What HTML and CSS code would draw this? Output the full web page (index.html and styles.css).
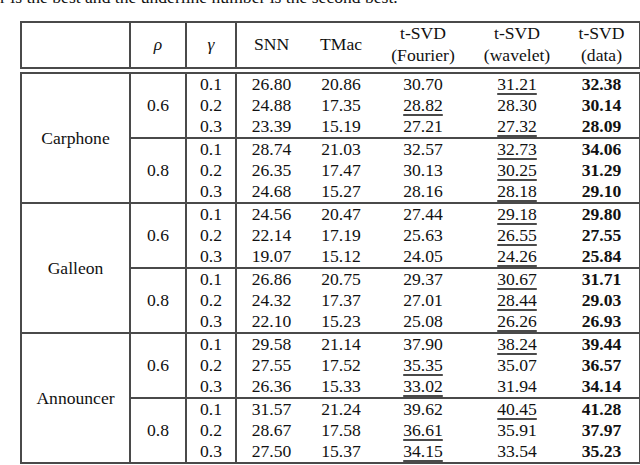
FILE: index.html
```html
<!DOCTYPE html>
<html>
<head>
<meta charset="utf-8">
<link rel="stylesheet" href="styles.css">
</head>
<body>
<p class="caption">r is the best and the underline number is the second best.</p>
<table class="results">
  <colgroup>
    <col class="w-name"><col class="w-rho"><col class="w-gamma">
    <col class="w-snn"><col class="w-tmac"><col class="w-svd"><col class="w-svd"><col class="w-data">
  </colgroup>
  <thead>
    <tr>
      <th class="sep"></th>
      <th class="sep"><i>ρ</i></th>
      <th class="sep"><i>γ</i></th>
      <th>SNN</th>
      <th>TMac</th>
      <th>t-SVD<br>(Fourier)</th>
      <th>t-SVD<br>(wavelet)</th>
      <th>t-SVD<br>(data)</th>
    </tr>
  </thead>
  <tbody class="gap"><tr><td colspan="8"></td></tr></tbody>
  <tbody class="set">
    <tr><td class="name" rowspan="6">Carphone</td><td class="rho" rowspan="3">0.6</td><td class="sep">0.1</td><td>26.80</td><td>20.86</td><td>30.70</td><td><u>31.21</u></td><td><b>32.38</b></td></tr>
    <tr><td class="sep">0.2</td><td>24.88</td><td>17.35</td><td><u>28.82</u></td><td>28.30</td><td><b>30.14</b></td></tr>
    <tr class="end"><td class="sep">0.3</td><td>23.39</td><td>15.19</td><td>27.21</td><td><u>27.32</u></td><td><b>28.09</b></td></tr>
    <tr><td class="rho" rowspan="3">0.8</td><td class="sep">0.1</td><td>28.74</td><td>21.03</td><td>32.57</td><td><u>32.73</u></td><td><b>34.06</b></td></tr>
    <tr><td class="sep">0.2</td><td>26.35</td><td>17.47</td><td>30.13</td><td><u>30.25</u></td><td><b>31.29</b></td></tr>
    <tr><td class="sep">0.3</td><td>24.68</td><td>15.27</td><td>28.16</td><td><u>28.18</u></td><td><b>29.10</b></td></tr>
  </tbody>
  <tbody class="set">
    <tr><td class="name" rowspan="6">Galleon</td><td class="rho" rowspan="3">0.6</td><td class="sep">0.1</td><td>24.56</td><td>20.47</td><td>27.44</td><td><u>29.18</u></td><td><b>29.80</b></td></tr>
    <tr><td class="sep">0.2</td><td>22.14</td><td>17.19</td><td>25.63</td><td><u>26.55</u></td><td><b>27.55</b></td></tr>
    <tr class="end"><td class="sep">0.3</td><td>19.07</td><td>15.12</td><td>24.05</td><td><u>24.26</u></td><td><b>25.84</b></td></tr>
    <tr><td class="rho" rowspan="3">0.8</td><td class="sep">0.1</td><td>26.86</td><td>20.75</td><td>29.37</td><td><u>30.67</u></td><td><b>31.71</b></td></tr>
    <tr><td class="sep">0.2</td><td>24.32</td><td>17.37</td><td>27.01</td><td><u>28.44</u></td><td><b>29.03</b></td></tr>
    <tr><td class="sep">0.3</td><td>22.10</td><td>15.23</td><td>25.08</td><td><u>26.26</u></td><td><b>26.93</b></td></tr>
  </tbody>
  <tbody class="set">
    <tr><td class="name" rowspan="6">Announcer</td><td class="rho" rowspan="3">0.6</td><td class="sep">0.1</td><td>29.58</td><td>21.14</td><td>37.90</td><td><u>38.24</u></td><td><b>39.44</b></td></tr>
    <tr><td class="sep">0.2</td><td>27.55</td><td>17.52</td><td><u>35.35</u></td><td>35.07</td><td><b>36.57</b></td></tr>
    <tr class="end"><td class="sep">0.3</td><td>26.36</td><td>15.33</td><td><u>33.02</u></td><td>31.94</td><td><b>34.14</b></td></tr>
    <tr><td class="rho" rowspan="3">0.8</td><td class="sep">0.1</td><td>31.57</td><td>21.24</td><td>39.62</td><td><u>40.45</u></td><td><b>41.28</b></td></tr>
    <tr><td class="sep">0.2</td><td>28.67</td><td>17.58</td><td><u>36.61</u></td><td>35.91</td><td><b>37.97</b></td></tr>
    <tr><td class="sep">0.3</td><td>27.50</td><td>15.37</td><td><u>34.15</u></td><td>33.54</td><td><b>35.23</b></td></tr>
  </tbody>
</table>
</body>
</html>
```

FILE: styles.css
```css
html, body {
  margin: 0;
  padding: 0;
  background: #fff;
}
body {
  font-family: "Liberation Serif", "Times New Roman", serif;
  font-size: 17.6px;
  color: #111;
  overflow: hidden;
}
.caption {
  margin: -13px 0 0 0;
  line-height: 20px;
  white-space: nowrap;
}
.results {
  margin: 14px 0 0 20px;
  border-collapse: collapse;
  table-layout: fixed;
  width: 619px;
}
.w-name { width: 109px; }
.w-rho { width: 56px; }
.w-gamma { width: 50px; }
.w-snn { width: 70px; }
.w-tmac { width: 70px; }
.w-svd { width: 94px; }
.w-data { width: 76px; }

.results thead,
.results tbody.set {
  border: 2px solid #4a4a4a;
}
.results th {
  font-weight: normal;
  padding: 0;
  height: 44px;
  line-height: 21.6px;
  text-align: center;
  vertical-align: middle;
}
.results td {
  padding: 0;
  height: 21px;
  line-height: 21px;
  text-align: center;
  vertical-align: middle;
}
.results .sep,
.results .rho,
.results .name {
  border-right: 2px solid #4a4a4a;
}
.results .rho {
  border-bottom: 2px solid #4a4a4a;
}
.results tr.end {
  border-bottom: 2px solid #4a4a4a;
}
.results tbody.gap td {
  height: 3px;
  line-height: 0;
  font-size: 0;
  border: none;
}
.results u {
  text-decoration: underline;
  text-decoration-thickness: 2px;
  text-underline-offset: 3px;
  text-decoration-color: #4a4a4a;
}
.results b {
  font-weight: bold;
}
```
